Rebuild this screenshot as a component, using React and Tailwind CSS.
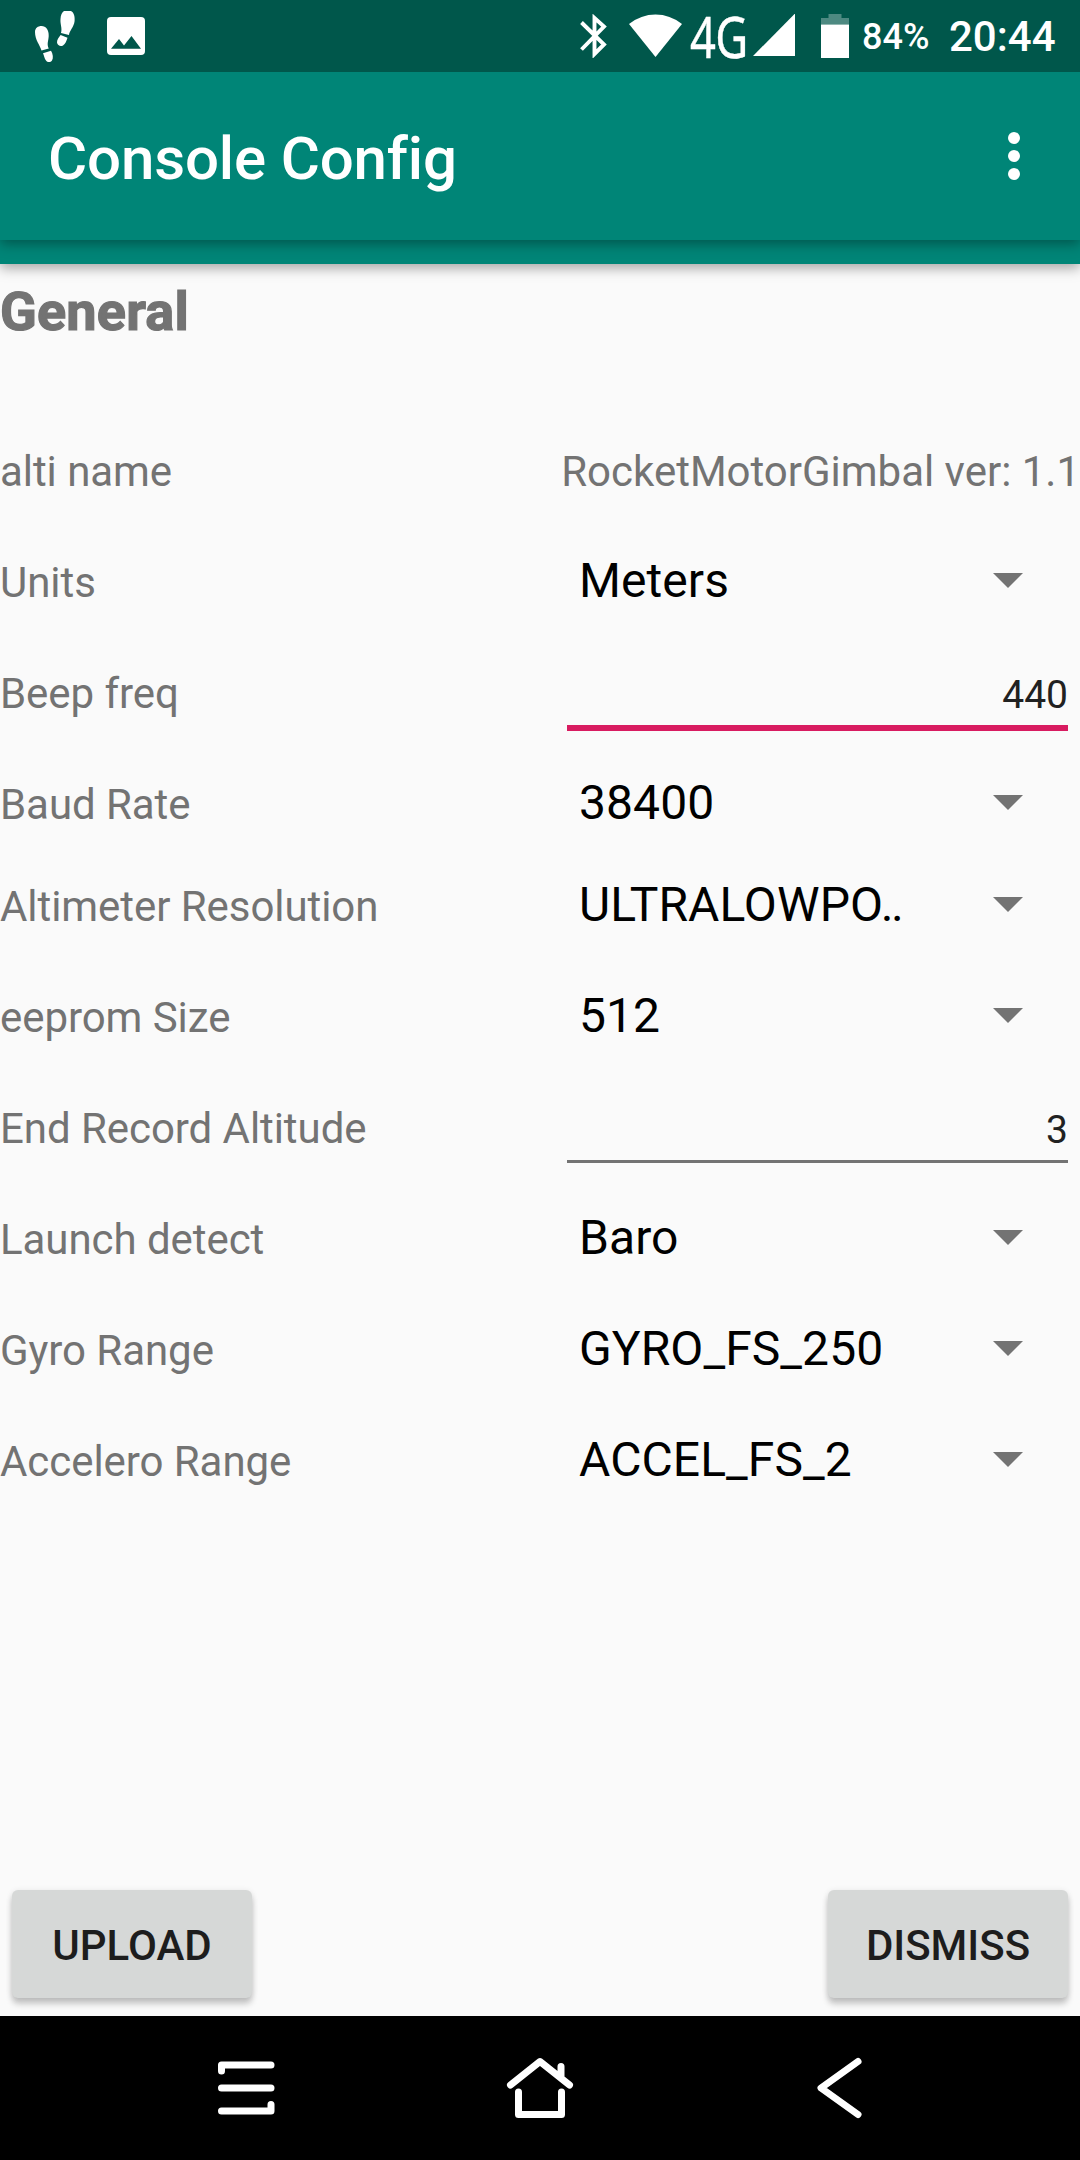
function Feet() {
  return (
    <svg className="ml-[35px] mt-[2px] h-[52px] w-[40px]" viewBox="0 0 40 52" fill="#fff">
      <path d="M0 21C0 17 3 15 6.500 15C11 15 14 19 13.700 25C13.500 30 11.500 33 13.800 37.500L6.500 39.600C5 34 0 29 0 21Z" />
      <path d="M8 42.200L16 39.700C18 43 18.500 47 17 49.500C15.500 51.500 12.500 51.500 11 49.500C9.500 47.500 9 44.500 8 42.200Z" />
      <path d="M29 0H36C39 1.500 40 5.500 39.600 10C39 16 34.500 19.500 34 24L26 22C27.500 17 25 13.500 25.500 8C25.700 4 27 1.500 29 0Z" />
      <path d="M25.600 24L32.500 26.800C31.500 30 30.500 33 28 34.500C25.500 36 22.500 34.500 22 31.500C21.800 28.500 24 26.500 25.600 24Z" />
    </svg>
  );
}

function StatusBar() {
  return (
    <div className="relative z-20 flex h-[72px] items-center bg-[#00574b] text-white">
      <Feet />
      <svg className="ml-[32px] h-[38px] w-[38px]" viewBox="0 0 38 38">
        <rect width="38" height="38" rx="4" fill="#fff" />
        <path d="M4 31.700L12 22L17 28.500L24.500 19L34 31.700Z" fill="#00574b" />
      </svg>
      <svg className="ml-[435px] h-[44px] w-[27px]" viewBox="0 0 27 44" fill="none" stroke="#fff" strokeWidth="3.900">
        <path d="M1.500 8.500L24 30.500L14.500 40V4L24 12.500L1.500 35.500" />
      </svg>
      <svg className="ml-[22px] h-[44px] w-[53px]" viewBox="0 0 53 44" fill="#fff">
        <path d="M0 10Q12 0.500 26.500 0.500T53 10L26.500 43Z" />
      </svg>
      <span className="-mr-[19px] ml-[8px] block h-[78px] w-[76px] shrink-0 origin-left scale-x-[0.81] whitespace-nowrap font-['Noto_Sans'] text-[56px] leading-[78px] tracking-[-1px] [-webkit-text-stroke:0.4px_white]">4G</span>
      <svg className="ml-[6px] h-[44px] w-[43px]" viewBox="0 0 43 44" fill="#fff">
        <path d="M0 42L42 -0.500V42Z" />
      </svg>
      <svg className="ml-[25px] h-[44px] w-[28px]" viewBox="0 0 28 44" fill="#fff">
        <path d="M7.500 0H20.500V4H28V10.500H0V4H7.500Z" fillOpacity="0.300" />
        <path d="M0 10.500H28V44H0Z" />
      </svg>
      <span className="ml-[13px] w-[67px] pt-[2px] text-[36px] font-medium leading-[72px]">84%</span>
      <span className="ml-[20px] pt-[2px] text-[42px] font-medium leading-[72px]">20:44</span>
    </div>
  );
}

const rows = [
  { label: "alti name", kind: "text", value: "RocketMotorGimbal ver: 1.1" },
  { label: "Units", kind: "select", value: "Meters" },
  { label: "Beep freq", kind: "input", value: "440", focused: true },
  { label: "Baud Rate", kind: "select", value: "38400", short: true },
  { label: "Altimeter Resolution", kind: "select", value: "ULTRALOWPO‥" },
  { label: "eeprom Size", kind: "select", value: "512" },
  { label: "End Record Altitude", kind: "input", value: "3" },
  { label: "Launch detect", kind: "select", value: "Baro" },
  { label: "Gyro Range", kind: "select", value: "GYRO_FS_250" },
  { label: "Accelero Range", kind: "select", value: "ACCEL_FS_2" },
];

function Value({ row }) {
  if (row.kind === "text") {
    return <span className="whitespace-nowrap text-[42px] leading-[56px] tracking-[-0.01px] text-[#737373]">{row.value}</span>;
  }
  if (row.kind === "input") {
    return (
      <div
        className={
          "mr-[12px] w-[501px] pb-[10px] text-right text-[39px] leading-[40px] text-[#212121] " +
          (row.focused ? "border-b-[6px] border-[#d81b60]" : "border-b-[3px] border-[#737373]")
        }
      >
        {row.value}
      </div>
    );
  }
  return (
    <div className="flex w-[501px] items-baseline justify-between pr-[57px]">
      <span className="whitespace-nowrap text-[48px] leading-[56px] tracking-[0.08px] text-black">{row.value}</span>
      <svg className="h-[15px] w-[30px] -translate-y-[9px]" viewBox="0 0 30 15" fill="#737373">
        <path d="M0 0H30L15 15Z" />
      </svg>
    </div>
  );
}

function Button({ children }) {
  return (
    <button className="h-[108px] w-[240px] rounded-[6px] bg-[#d6d8d7] pt-[3px] text-[42px] font-medium leading-[105px] text-[#1d1d1d] shadow-[0_6px_6px_rgba(0,0,0,0.200),0_1px_6px_rgba(0,0,0,0.100)]">
      {children}
    </button>
  );
}

export default function App() {
  return (
    <div className="flex h-[2160px] w-[1080px] flex-col overflow-hidden bg-[#fafafa] font-[Roboto,sans-serif]">
      <StatusBar />
      <header className="relative z-10 h-[192px] bg-[#008577] shadow-[0_4px_12px_rgba(0,0,0,0.350)]">
        <div className="flex h-[168px] items-center justify-between bg-[#008577] pl-[48px] pr-[60px] shadow-[0_4px_12px_rgba(0,0,0,0.350)]">
          <h1 className="pt-[5px] text-[60px] font-medium leading-[70px] tracking-[-0.15px] text-white">Console Config</h1>
          <div className="flex flex-col gap-[6px]">
            <span className="h-[12px] w-[12px] rounded-full bg-white" />
            <span className="h-[12px] w-[12px] rounded-full bg-white" />
            <span className="h-[12px] w-[12px] rounded-full bg-white" />
          </div>
        </div>
      </header>
      <main className="flex flex-1 flex-col">
        <h2 className="h-[152px] pt-[16px] text-[54px] font-bold leading-[64px] tracking-[0.2px] text-[#737373] [-webkit-text-stroke:1.2px_#737373]">General</h2>
        {rows.map((row) => (
          <div key={row.label} className={"flex items-baseline justify-between " + (row.short ? "h-[102px]" : "h-[111px]")}>
            <span className="whitespace-nowrap text-[42px] leading-[111px] tracking-[-0.06px] text-[#737373]">{row.label}</span>
            <Value row={row} />
          </div>
        ))}
        <div className="mt-auto flex justify-between px-[12px] pb-[18px]">
          <Button>UPLOAD</Button>
          <Button>DISMISS</Button>
        </div>
      </main>
      <nav className="flex h-[144px] items-center bg-black">
        <svg className="ml-[216px] h-[60px] w-[60px]" viewBox="0 0 60 60" fill="none" stroke="#fff" strokeWidth="7" strokeLinecap="round" strokeLinejoin="round">
          <path d="M5.500 13V7H55M5.500 30H55M5.500 53H55V46.500" />
        </svg>
        <svg className="ml-[230px] h-[62px] w-[68px]" viewBox="0 0 68 62" fill="none" stroke="#fff" strokeWidth="7" strokeLinecap="round" strokeLinejoin="round">
          <path d="M4.500 28L34 4.500L63.500 28M55 9.500V20M12.500 35V57.500H55.500V35" />
        </svg>
        <svg className="ml-[241px] h-[62px] w-[50px]" viewBox="0 0 50 62" fill="none" stroke="#fff" strokeWidth="7" strokeLinecap="round" strokeLinejoin="round">
          <path d="M43 4.500L6 31L43 57.500" />
        </svg>
      </nav>
    </div>
  );
}
